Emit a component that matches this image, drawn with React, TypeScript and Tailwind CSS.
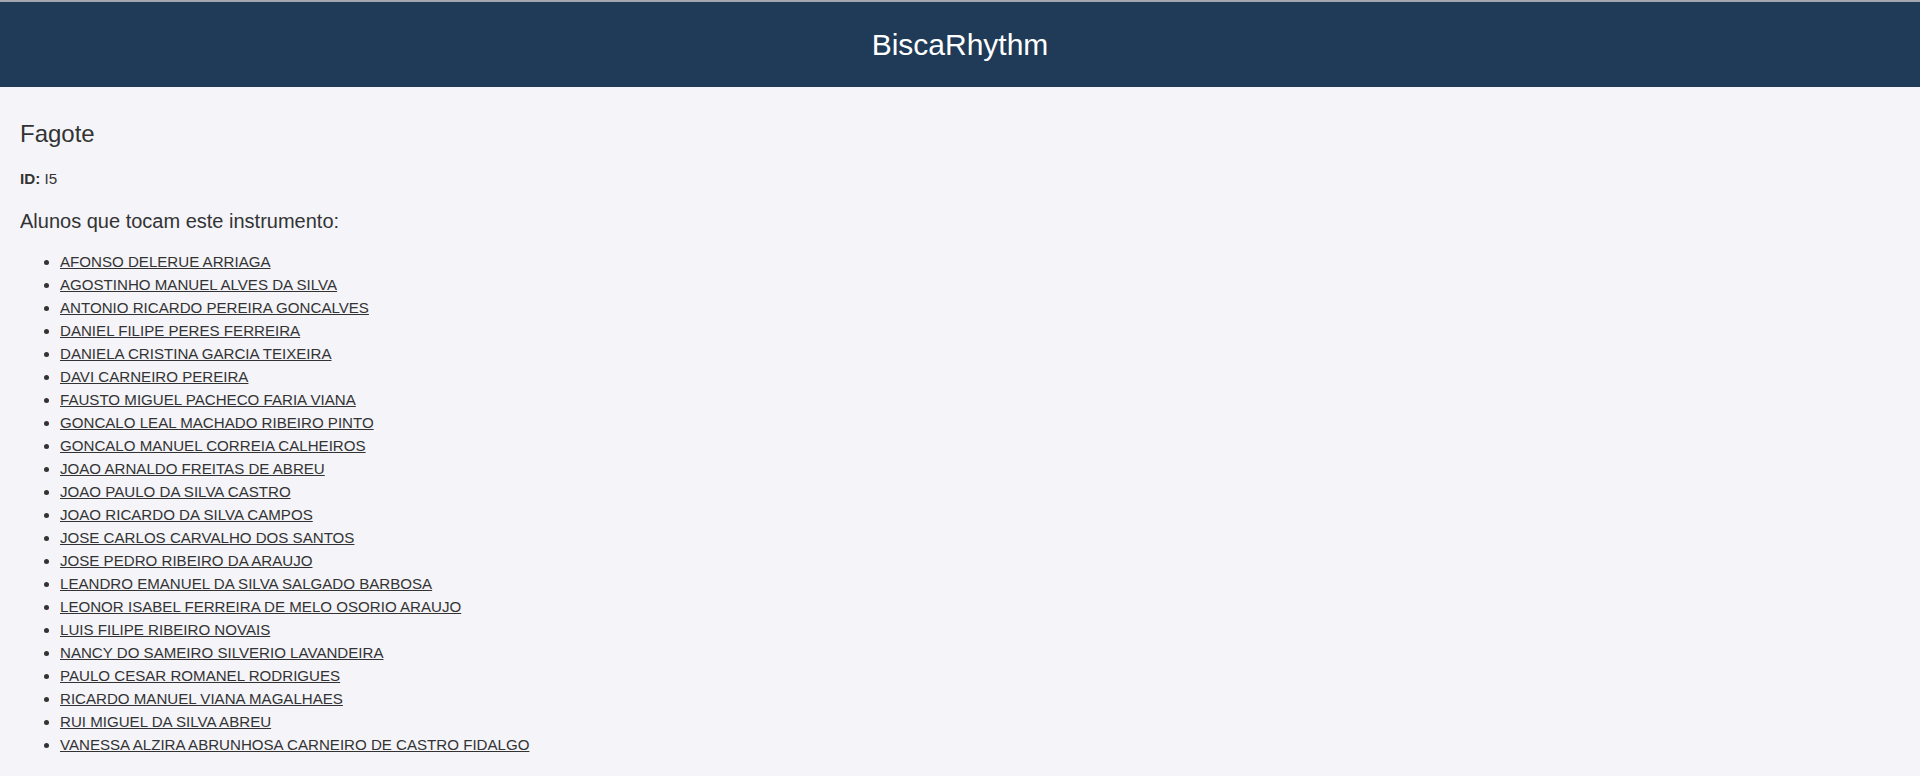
const alunos: string[] = [
    "AFONSO DELERUE ARRIAGA",
    "AGOSTINHO MANUEL ALVES DA SILVA",
    "ANTONIO RICARDO PEREIRA GONCALVES",
    "DANIEL FILIPE PERES FERREIRA",
    "DANIELA CRISTINA GARCIA TEIXEIRA",
    "DAVI CARNEIRO PEREIRA",
    "FAUSTO MIGUEL PACHECO FARIA VIANA",
    "GONCALO LEAL MACHADO RIBEIRO PINTO",
    "GONCALO MANUEL CORREIA CALHEIROS",
    "JOAO ARNALDO FREITAS DE ABREU",
    "JOAO PAULO DA SILVA CASTRO",
    "JOAO RICARDO DA SILVA CAMPOS",
    "JOSE CARLOS CARVALHO DOS SANTOS",
    "JOSE PEDRO RIBEIRO DA ARAUJO",
    "LEANDRO EMANUEL DA SILVA SALGADO BARBOSA",
    "LEONOR ISABEL FERREIRA DE MELO OSORIO ARAUJO",
    "LUIS FILIPE RIBEIRO NOVAIS",
    "NANCY DO SAMEIRO SILVERIO LAVANDEIRA",
    "PAULO CESAR ROMANEL RODRIGUES",
    "RICARDO MANUEL VIANA MAGALHAES",
    "RUI MIGUEL DA SILVA ABREU",
    "VANESSA ALZIRA ABRUNHOSA CARNEIRO DE CASTRO FIDALGO",
];

export default function App() {
    return (
        <div className="min-h-screen bg-[#f4f4f9] font-['Liberation_Sans',Arial,sans-serif] text-[#333]">

            {/* Cabeçalho */}
            <header className="border-t-2 border-[#a3a8ae] bg-[#1f3b57] h-[87px] flex items-center justify-center">
                <h1 className="text-[30px] leading-[34px] text-white">
                    BiscaRhythm
                </h1>
            </header>

            {/* Conteúdo */}
            <main className="px-5 pt-[33px] pb-3">

                <h2 className="text-[24px] leading-[28px]">Fagote</h2>

                <p className="mt-[23px] text-[15.2px] leading-[16px]">
                    <strong>ID:</strong> I5
                </p>

                <h3 className="mt-[23px] text-[20px] leading-[23px]">
                    Alunos que tocam este instrumento:
                </h3>

                <ul className="mt-[17px] list-disc pl-10 text-[15.1px] leading-[23px]">
                    {alunos.map((nome) => (
                        <li key={nome}>
                            <a href="#" className="underline text-[#333]">
                                {nome}
                            </a>
                        </li>
                    ))}
                </ul>

            </main>

        </div>
    );
}
